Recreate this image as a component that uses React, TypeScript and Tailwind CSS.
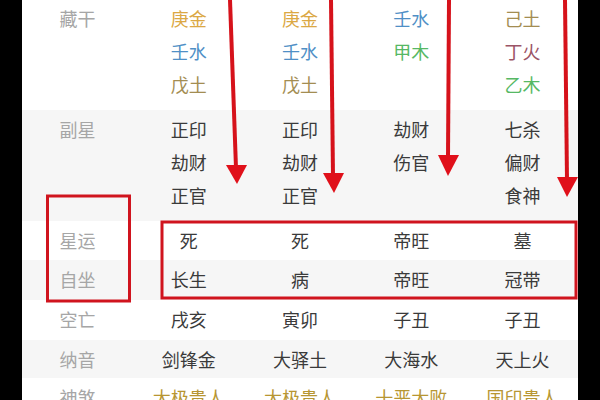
import React from "react";

type Cell = { t: string; c?: string };
type Row = { label: string; bg: string; h: string; pt: string; cells: Cell[][] };

const GOLD = "text-[#dba844]";
const BLUE = "text-[#4f8fc6]";
const OLIVE = "text-[#a38d52]";
const GREEN = "text-[#56b864]";
const PLUM = "text-[#9b5466]";
const DARK = "text-[#3a3a3a]";
const SHEN = "text-[#b79632]";

const rows: Row[] = [
  {
    label: "藏干",
    bg: "bg-white",
    h: "h-[110px]",
    pt: "pt-[2px]",
    cells: [
      [{ t: "庚金", c: GOLD }, { t: "壬水", c: BLUE }, { t: "戊土", c: OLIVE }],
      [{ t: "庚金", c: GOLD }, { t: "壬水", c: BLUE }, { t: "戊土", c: OLIVE }],
      [{ t: "壬水", c: BLUE }, { t: "甲木", c: GREEN }],
      [{ t: "己土", c: OLIVE }, { t: "丁火", c: PLUM }, { t: "乙木", c: GREEN }],
    ],
  },
  {
    label: "副星",
    bg: "bg-[#f6f6f6]",
    h: "h-[111px]",
    pt: "pt-[3px]",
    cells: [
      [{ t: "正印" }, { t: "劫财" }, { t: "正官" }],
      [{ t: "正印" }, { t: "劫财" }, { t: "正官" }],
      [{ t: "劫财" }, { t: "伤官" }],
      [{ t: "七杀" }, { t: "偏财" }, { t: "食神" }],
    ],
  },
  {
    label: "星运",
    bg: "bg-white",
    h: "h-[39px]",
    pt: "pt-[3px]",
    cells: [[{ t: "死" }], [{ t: "死" }], [{ t: "帝旺" }], [{ t: "墓" }]],
  },
  {
    label: "自坐",
    bg: "bg-[#f6f6f6]",
    h: "h-[40px]",
    pt: "pt-[3px]",
    cells: [[{ t: "长生" }], [{ t: "病" }], [{ t: "帝旺" }], [{ t: "冠带" }]],
  },
  {
    label: "空亡",
    bg: "bg-white",
    h: "h-[40px]",
    pt: "pt-[3px]",
    cells: [[{ t: "戌亥" }], [{ t: "寅卯" }], [{ t: "子丑" }], [{ t: "子丑" }]],
  },
  {
    label: "纳音",
    bg: "bg-[#f6f6f6]",
    h: "h-[38px]",
    pt: "pt-[3px]",
    cells: [[{ t: "剑锋金" }], [{ t: "大驿土" }], [{ t: "大海水" }], [{ t: "天上火" }]],
  },
  {
    label: "神煞",
    bg: "bg-white",
    h: "h-[40px]",
    pt: "pt-[3px]",
    cells: [
      [{ t: "太极贵人", c: SHEN }],
      [{ t: "太极贵人", c: SHEN }],
      [{ t: "十恶大败", c: SHEN }],
      [{ t: "国印贵人", c: SHEN }],
    ],
  },
];

export default function App() {
  return (
    <div
      className="relative flex h-[400px] w-[600px] overflow-hidden bg-black"
      style={{ fontFamily: '"Noto Sans CJK SC", "Noto Sans", sans-serif' }}
    >
      <div className="ml-[22px] flex w-[556px] shrink-0 flex-col bg-white text-[18px] leading-[33px]">
        {rows.map((r) => (
          <div key={r.label} className={`grid shrink-0 grid-cols-5 ${r.bg} ${r.h} ${r.pt}`}>
            <div className="text-center text-[#a6a6a6]">{r.label}</div>
            {r.cells.map((col, i) => (
              <div key={i} className="flex flex-col items-center">
                {col.map((cell, j) => (
                  <span key={j} className={cell.c ?? DARK}>
                    {cell.t}
                  </span>
                ))}
              </div>
            ))}
          </div>
        ))}
      </div>

      <svg
        className="pointer-events-none absolute left-0 top-0"
        width="600"
        height="400"
        viewBox="0 0 600 400"
      >
        <g stroke="#d6121b" fill="none" strokeWidth="4">
          <line x1="230" y1="0" x2="236" y2="168" />
          <line x1="331" y1="0" x2="333" y2="176" />
          <line x1="449" y1="0" x2="448" y2="158" />
          <line x1="565" y1="0" x2="567" y2="180" />
        </g>
        <g fill="#e0101a">
          <polygon points="226,165 247,165 237,184" />
          <polygon points="323,173 344,173 334,193" />
          <polygon points="438,155 459,155 448,176" />
          <polygon points="557,177 578,177 567,197" />
        </g>
        <g stroke="#d0141e" fill="none" strokeWidth="3">
          <rect x="47.5" y="196" width="82" height="105" />
          <rect x="162" y="222" width="414" height="76" />
        </g>
      </svg>
    </div>
  );
}
